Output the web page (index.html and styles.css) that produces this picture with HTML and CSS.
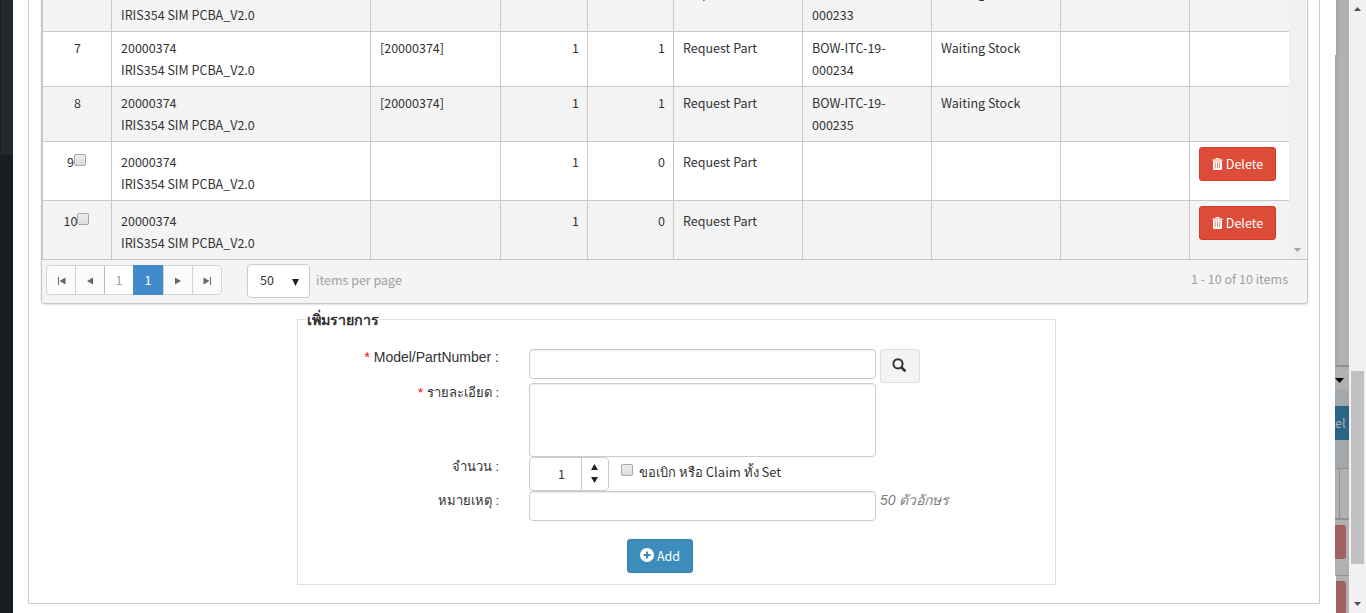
FILE: index.html
```html
<!DOCTYPE html>
<html lang="th">
<head>
<meta charset="utf-8">
<title>Request Part</title>
<link rel="stylesheet" href="styles.css">
</head>
<body>
<div class="page">
  <div class="sidebar"><div class="sidebar-menu"></div></div>
  <main class="modal">
    <section class="panel">
      <div class="grid">
        <div class="grid-body">
          <table class="items">
            <colgroup><col class="c-no"><col class="c-model"><col class="c-part"><col class="c-qty"><col class="c-got"><col class="c-doc"><col class="c-doc"><col class="c-doc"><col class="c-doc"><col class="c-act"></colgroup>
            <tbody>
              <tr class="alt"><td class="mid">6</td><td>20000374<br>IRIS354 SIM PCBA_V2.0</td><td>[20000374]</td><td class="num">1</td><td class="num">1</td><td>Request Part</td><td>BOW-ITC-19-<br>000233</td><td>Waiting Stock</td><td></td><td></td></tr>
              <tr><td class="mid">7</td><td>20000374<br>IRIS354 SIM PCBA_V2.0</td><td>[20000374]</td><td class="num">1</td><td class="num">1</td><td>Request Part</td><td>BOW-ITC-19-<br>000234</td><td>Waiting Stock</td><td></td><td></td></tr>
              <tr class="alt"><td class="mid">8</td><td>20000374<br>IRIS354 SIM PCBA_V2.0</td><td>[20000374]</td><td class="num">1</td><td class="num">1</td><td>Request Part</td><td>BOW-ITC-19-<br>000235</td><td>Waiting Stock</td><td></td><td></td></tr>
              <tr class="tall"><td class="mid">9<span class="check"></span></td><td>20000374<br>IRIS354 SIM PCBA_V2.0</td><td></td><td class="num">1</td><td class="num">0</td><td>Request Part</td><td></td><td></td><td></td><td class="act"><button class="btn btn-danger"><svg width="11" height="12" viewBox="0 0 11 12"><path fill="#fff" fill-rule="evenodd" d="M3.5 1.5V.7Q3.5 0 4.2 0h2.6q.7 0 .7.7v.8H10q.7 0 .7.7v.6H.3v-.6q0-.7.7-.7zM4.5 1v.5h2V1zM1 3.3h9v7.5q0 1.2-1.2 1.2H2.2Q1 12 1 10.800zM2.800 4.500v5.800h.7V4.500zM5.100 4.500v5.800h.7V4.500zM7.400 4.500v5.800h.7V4.500z"/></svg>Delete</button></td></tr>
              <tr class="alt tall"><td class="mid">10<span class="check"></span></td><td>20000374<br>IRIS354 SIM PCBA_V2.0</td><td></td><td class="num">1</td><td class="num">0</td><td>Request Part</td><td></td><td></td><td></td><td class="act"><button class="btn btn-danger"><svg width="11" height="12" viewBox="0 0 11 12"><path fill="#fff" fill-rule="evenodd" d="M3.5 1.5V.7Q3.5 0 4.2 0h2.6q.7 0 .7.7v.8H10q.7 0 .7.7v.6H.3v-.6q0-.7.7-.7zM4.5 1v.5h2V1zM1 3.3h9v7.5q0 1.2-1.2 1.2H2.2Q1 12 1 10.800zM2.800 4.500v5.800h.7V4.500zM5.100 4.500v5.800h.7V4.500zM7.400 4.500v5.800h.7V4.500z"/></svg>Delete</button></td></tr>
            </tbody>
          </table>
          <div class="grid-scroll"><svg width="7" height="4" viewBox="0 0 7 4"><path fill="#a3a3a3" d="M0 0h7L3.500 4z"/></svg></div>
        </div>
        <div class="pager">
          <div class="pages">
            <span class="pg"><svg width="8" height="8" viewBox="0 0 8 8"><path fill="#666" d="M0 0h1v8H0zM7.500 .5v7L1.500 4z"/></svg></span>
            <span class="pg"><svg width="6" height="8" viewBox="0 0 6 8"><path fill="#666" d="M6 .5v7L0 4z"/></svg></span>
            <span class="pg pg-input">1</span>
            <span class="pg pg-current">1</span>
            <span class="pg"><svg width="6" height="8" viewBox="0 0 6 8"><path fill="#666" d="M0 .5v7L6 4z"/></svg></span>
            <span class="pg"><svg width="8" height="8" viewBox="0 0 8 8"><path fill="#666" d="M7 0h1v8H7zM.5 .5v7l6-3.500z"/></svg></span>
          </div>
          <div class="size"><span>50</span><svg width="7" height="7" viewBox="0 0 7 7"><path fill="#222" d="M0 0h7L3.500 7z"/></svg></div>
          <span class="pager-label">items per page</span>
          <span class="pager-info">1 - 10 of 10 items</span>
        </div>
      </div>

      <fieldset class="add-form">
        <legend>เพิ่มรายการ</legend>
        <div class="row">
          <label class="arial"><b>*</b> Model/PartNumber :</label>
          <div class="input"></div>
          <button class="btn-search"><svg width="15" height="15" viewBox="0 0 15 15" fill="none" stroke="#333"><circle cx="6" cy="5.800" r="4.600" stroke-width="2"/><path stroke-width="2.700" d="M9.300 9.200l4.200 4.200"/></svg></button>
        </div>
        <div class="row row-area">
          <label><b>*</b> รายละเอียด :</label>
          <div class="input area"></div>
        </div>
        <div class="row">
          <label>จำนวน :</label>
          <div class="spinner"><span class="value">1</span><span class="steps"><svg width="7" height="6" viewBox="0 0 7 6"><path fill="#222" d="M0 6h7L3.500 0z"/></svg><svg width="7" height="6" viewBox="0 0 7 6"><path fill="#222" d="M0 0h7L3.500 6z"/></svg></span></div>
          <span class="check set-check"></span>
          <span class="set-label">ขอเบิก หรือ Claim ทั้ง Set</span>
        </div>
        <div class="row">
          <label>หมายเหตุ :</label>
          <div class="input"></div>
          <em class="hint">50 ตัวอักษร</em>
        </div>
        <div class="actions">
          <button class="btn btn-add"><svg width="14" height="14" viewBox="0 0 14 14"><circle cx="7" cy="7" r="7" fill="#fff"/><path fill="#3c8dbc" d="M6 3.500h2V6h2.500v2H8v2.500H6V8H3.500V6H6z"/></svg>Add</button>
        </div>
      </fieldset>
    </section>
  </main>
  <div class="backdrop">
    <div class="bd-top"></div>
    <div class="bd-upper"></div>
    <div class="bd-arrow"><svg width="9" height="5" viewBox="0 0 9 5"><path d="M0 0h9L4.500 5z"/></svg></div>
    <div class="bd-head"></div>
    <div class="bd-button">el</div>
    <div class="bd-gap"></div>
    <div class="bd-cells"></div>
    <div class="bd-row"><div class="bd-red"></div></div>
    <div class="bd-row bd-last"><div class="bd-red"></div></div>
  </div>
  <div class="scrollbar">
    <svg width="7" height="4" viewBox="0 0 7 4"><path fill="#505050" d="M0 4h7L3.500 0z"/></svg>
    <div class="thumb"></div>
    <svg width="7" height="4" viewBox="0 0 7 4"><path fill="#505050" d="M0 0h7L3.500 4z"/></svg>
  </div>
</div>
</body>
</html>
```

FILE: styles.css
```css
* { box-sizing: border-box; }
body {
  margin: 0;
  height: 613px;
  overflow: hidden;
  background: #fff;
  color: #333;
  font: 12.53px/22px "Noto Sans CJK SC", "Liberation Sans", sans-serif;
}
svg { display: block; flex: none; }
.page { display: flex; height: 613px; }

.sidebar { width: 13px; background: #181f22; }
.sidebar-menu { height: 155px; margin-left: 1px; background: #222a30; }

.modal { width: 1322px; padding: 0 15px; }
.panel {
  width: 1292px;
  height: 604px;
  padding: 0 12px;
  border: solid #ccc;
  border-width: 0 1px 1px;
}

.grid {
  width: 1267px;
  height: 304px;
  border: 1px solid #c5c5c5;
  border-top: 0;
  border-radius: 0 0 4px 4px;
  box-shadow: 0 1px 2px rgba(0, 0, 0, .12);
}
.grid-body { display: flex; align-items: flex-end; height: 259px; overflow: hidden; }
.items { flex: none; width: 1247px; border-collapse: separate; border-spacing: 0; table-layout: fixed; }
.c-no { width: 69px; }
.c-model { width: 259px; }
.c-part { width: 130px; }
.c-qty { width: 87px; }
.c-got { width: 86px; }
.c-doc { width: 129px; }
.c-act { width: 100px; }
.items tr { height: 55px; }
.items td {
  padding: 5px 8px 5px 9px;
  border: solid #c9c9c9;
  border-width: 1px 0 0 1px;
  vertical-align: top;
  white-space: nowrap;
}
.items .alt { background: #f4f4f4; }
.items .tall { height: 59px; }
.items .tall td { padding-top: 9px; }
.items .tall .act { padding: 5px 9px 0; }
.items .mid { text-align: center; }
.items .tall .mid { padding-right: 10px; }
.items .num { text-align: right; }

.check {
  display: inline-block;
  width: 12px;
  height: 12px;
  border: 1px solid #a6a6a6;
  border-radius: 2px;
  background: linear-gradient(#eee, #dcdcdc);
  vertical-align: 1px;
}
.grid-scroll {
  align-self: stretch;
  display: flex;
  align-items: flex-end;
  justify-content: center;
  width: 17px;
  padding-bottom: 7px;
  background: #f0f0f0;
}

.btn {
  display: flex;
  align-items: center;
  justify-content: center;
  gap: 3px;
  height: 34px;
  padding: 0;
  border: 1px solid;
  border-radius: 3px;
  color: #fff;
  font: inherit;
}
.btn-danger { width: 77px; background: #dd4b39; border-color: #d73925; }
.btn-add { width: 66px; background: #3c8dbc; border-color: #367fa9; }
.btn-add svg { margin-bottom: 2px; }

.pager {
  display: flex;
  height: 44px;
  padding: 4px 19px 0 4px;
  border-top: 1px solid #c5c5c5;
  border-radius: 0 0 4px 4px;
  background: #f4f4f4;
  color: #a0a0a0;
}
.pages { display: flex; height: 30px; margin-top: 1px; border: 1px solid #d4d4d4; border-radius: 4px; background: #fbfbfb; width: 176px; }
.pg { display: flex; align-items: center; justify-content: center; width: 29px; border-left: 1px solid #d4d4d4; }
.pg svg { margin-top: 2px; }
.pg:first-child { width: 28px; padding-left: 1px; border: 0; }
.pg-input { background: #fff; border-color: #bbb; }
.pg-current { width: 30px; margin: -1px 0; border: 0; background: #428bca; color: #fff; }
.size {
  display: flex;
  align-items: center;
  justify-content: space-between;
  width: 63px;
  height: 34px;
  margin: 0 6px 0 25px;
  padding: 0 10px 2px 12px;
  border: 1px solid #ccc;
  border-radius: 4px;
  background: #fff;
  color: #333;
}
.size svg { margin-top: 4px; }
.pager-label { line-height: 31px; }
.pager-info { margin-left: auto; line-height: 29px; }

.add-form {
  width: 759px;
  height: 276px;
  margin: 5px 0 0 256px;
  padding: 19px 0 0;
  border: 1px solid #ddd;
}
legend { height: 21px; margin-left: 8px; padding: 0 1px; font-weight: bold; font-size: 14.300px; line-height: 20px; }
.row { display: flex; height: 34px; }
.row-area { height: 74px; }
label { width: 201px; margin-right: 30px; padding-top: 1px; text-align: right; font: 13px/18px "Liberation Sans", Arial, sans-serif; }
label b { color: #f00; font-weight: normal; }
.arial { padding-top: 0; font-size: 14px; line-height: 16px; }
.input { width: 347px; height: 30px; border: 1px solid #ccc; border-radius: 4px; box-shadow: inset 0 1px 1px rgba(0, 0, 0, .08); }
.area { height: 74px; }
.btn-search {
  display: flex;
  align-items: center;
  justify-content: center;
  width: 40px;
  height: 34px;
  margin-left: 4px;
  padding: 0 1px 2px 0;
  border: 1px solid #ddd;
  border-radius: 3px;
  background: #f4f4f4;
}
.spinner { display: flex; width: 80px; height: 34px; border: 1px solid #ccc; border-radius: 4px; }
.value { width: 51px; padding-right: 16px; text-align: right; line-height: 31px; }
.steps { display: flex; flex: 1; flex-direction: column; align-items: center; justify-content: center; gap: 7px; padding: 0 1px 2px 0; border-left: 1px solid #ccc; }
.set-check { margin: 7px 6px 0 12px; }
.set-label { font-size: 13px; line-height: 30px; }
.hint { margin-left: 4px; color: #808080; font: italic 14px/18px "Liberation Sans", sans-serif; }
.actions { display: flex; padding: 14px 0 0 329px; }

.backdrop { width: 14px; background: #b1b1b1; overflow: hidden; }
.bd-top { height: 55px; border-left: 1px solid #fff; }
.bd-top, .bd-upper { background: linear-gradient(90deg, #a5a5a5, #b1b1b1 5px); }
.bd-upper { height: 310px; }
.bd-arrow { height: 24px; padding: 11px 0 0; border-top: 2px solid #929292; }
.bd-head { height: 17px; background: #a3a8ad; }
.bd-button { height: 34px; background: #2a6486; color: #b1b1b1; line-height: 34px; text-align: left; }
.bd-gap { height: 28px; background: #a3a8ad; }
.bd-cells { height: 50px; border-top: 1px solid #8f8f8f; background: linear-gradient(90deg, transparent 4px, #8f8f8f 4px, #8f8f8f 5px, transparent 5px); }
.bd-row { height: 57px; padding-top: 5px; border-top: 2px solid #929292; }
.bd-red { width: 11px; height: 34px; border-radius: 0 3px 3px 0; background: #a26062; }
.bd-last { height: 38px; border-top-width: 1px; border-left: 1px solid #fff; }
.bd-last .bd-red { width: 10px; }

.scrollbar { display: flex; flex-direction: column; align-items: center; width: 17px; padding: 7px 0; background: #f1f1f1; }
.thumb { width: 13px; height: 193px; margin: 360px 0 38px; background: #c1c1c1; }
```
